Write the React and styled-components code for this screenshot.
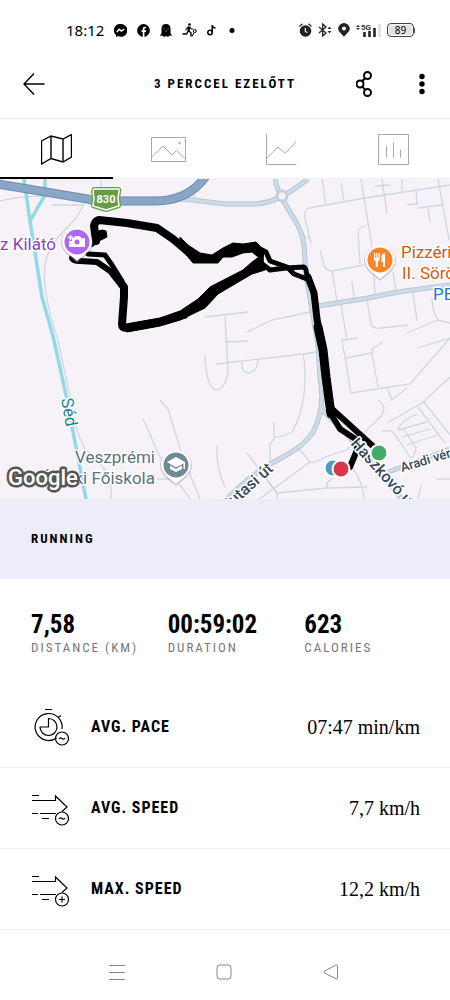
import React, { useState } from 'react';
import styled, { createGlobalStyle } from 'styled-components';

const condensed = '"Liberation Sans Narrow", "Roboto Condensed", "Open Sans Condensed", Roboto, sans-serif';

const GlobalStyle = createGlobalStyle`
  * {
    box-sizing: border-box;
  }

  body {
    margin: 0;
    background: #fff;
    color: #000;
    font-family: Roboto, sans-serif;
  }
`;

const Page = styled.div`
  display: flex;
  flex-direction: column;
  min-height: 100vh;
  overflow: hidden;
`;

const StatusBar = styled.div`
  display: flex;
  justify-content: space-between;
  align-items: center;
  height: 60px;
  padding: 0 35px 0 66px;
`;

const StatusGroup = styled.div`
  display: flex;
  align-items: center;
  gap: ${({ $gap }) => $gap}px;
`;

const Time = styled.span`
  font: 15px/20px "Noto Sans", sans-serif;
`;

const Battery = styled.span`
  display: flex;
  align-items: center;

  &::after {
    content: '';
    width: 1px;
    height: 5px;
    background: #555;
  }
`;

const BatteryLevel = styled.span`
  width: 27px;
  height: 14px;
  border: 1px solid #444;
  border-radius: 4px;
  background: #e2e2e2;
  box-shadow: inset 0 0 0 1px #fff;
  font: 10px/12px "Noto Sans", sans-serif;
  text-align: center;
`;

const Header = styled.header`
  display: grid;
  grid-template-columns: 1fr auto 1fr;
  align-items: center;
  height: 59px;
  padding: 0 16px 10px;
  border-bottom: 1px solid #e8e9f5;
`;

const HeaderActions = styled.div`
  display: flex;
  justify-content: flex-end;
  gap: 28px;
`;

const IconButton = styled.button`
  display: flex;
  justify-content: center;
  align-items: center;
  width: 36px;
  height: 36px;
  padding: 0;
  border: none;
  background: none;
`;

const MenuButton = styled(IconButton)`
  width: 24px;
`;

const Title = styled.h1`
  margin: 0;
  font: bold 13px/20px ${condensed};
  letter-spacing: 2px;
`;

const Tabs = styled.nav`
  display: grid;
  grid-template-columns: repeat(4, 1fr);
  height: 60px;
`;

const Tab = styled.button`
  display: flex;
  justify-content: center;
  align-items: center;
  padding: 2px 0 0;
  border: none;
  border-bottom: ${({ $active }) => ($active ? '2px solid #000' : '1px solid #eef0f4')};
  background: none;
  color: ${({ $active }) => ($active ? '#000' : '#aaa')};
`;

const MapView = styled.svg`
  display: block;
  width: 100%;
  height: 320px;
  background: #f6f2f8;
`;

const MapLabel = styled.text`
  font: ${({ $weight }) => $weight || 400} ${({ $size }) => $size || 17}px Roboto, sans-serif;
  fill: ${({ $color }) => $color};
  stroke: #fff;
  stroke-width: 3px;
  stroke-linejoin: round;
  paint-order: stroke;
`;

const Brand = styled.text`
  font: 500 22px Roboto, sans-serif;
  fill: #fff;
  stroke: #555;
  stroke-width: 5px;
  stroke-linejoin: round;
  paint-order: stroke;
`;

const Activity = styled.h2`
  margin: 0;
  padding: 30px 31px;
  background: #ededf9;
  font: bold 13px/20px ${condensed};
  letter-spacing: 2px;
`;

const Stats = styled.dl`
  display: grid;
  grid-template-columns: repeat(3, 1fr);
  height: 108px;
  margin: 0;
  padding: 32px 9px 0 31px;
`;

const Stat = styled.div`
  display: flex;
  flex-direction: column-reverse;
  justify-content: flex-end;
`;

const StatLabel = styled.dt`
  color: #777;
  font: 13px/20px ${condensed};
  letter-spacing: 2px;
`;

const StatValue = styled.dd`
  margin: 0;
  font: bold 25px/27px ${condensed};
`;

const Details = styled.dl`
  margin: 0;
`;

const DetailRow = styled.div`
  display: flex;
  align-items: center;
  height: 81px;
  padding: 0 30px 0 31px;
  border-bottom: 1px solid #eeeef8;
`;

const DetailLabel = styled.dt`
  flex: 1;
  padding-left: 20px;
  font: bold 16px/20px ${condensed};
  letter-spacing: 1px;
`;

const DetailValue = styled.dd`
  margin: 0;
  font: 20px/24px "Liberation Serif", serif;
`;

const SystemNav = styled.nav`
  display: flex;
  justify-content: center;
  gap: 71px;
  padding: 24px 2px 10px 0;
`;

const riverPaths = [
  'M24 0L30 42L42 118L53 157L66 216L86 320',
  'M45 0V16L30 42',
];

const wideRoads = [
  'M180 20L192 21L225 25L255 25Q270 24 282 17',
  'M275 -2Q276 10 282 17Q294 11 308 0',
  'M282 17C286 32 302 45 304 66L306 96L318 166L320 199Q326 229 313 253C306 264 297 271 272 284Q250 296 225 322',
  'M318 127L368 119L398 113L450 106',
  'M322 231L345 253L402 320',
  'M388 293L402 288L450 270',
];

const thinRoads = [
  'M0 22Q22 16 66 17', 'M51 26H84', 'M101 0V12', 'M192 12L196 21L188 20',
  'M84 21C80 45 58 50 48 75C40 95 46 125 58 161L70 218Q74 250 85 270C110 292 112 300 111 320',
  'M311 64L305 39Q304 31 309 29L365 19L450 6', 'M303 60L309 58',
  'M322 0L326 26', 'M341 4L344 22', 'M361 0L372 68L375 115', 'M402 0V13',
  'M375 7L390 6', 'M382 0L387 35', 'M438 0L449 61', 'M418 29L442 26', 'M428 29L430 43',
  'M416 12L417 25L407 26', 'M360 85L358 53Q358 49 367 46',
  'M320 71L324 86Q326 92 332 92L364 86', 'M332 92L337 122', 'M352 102L354 119',
  'M393 93L396 113', 'M413 113L417 142', 'M367 121L371 145Q372 150 382 149L408 146',
  'M341 126L347 161', 'M407 154L438 141L450 144', 'M432 119Q432 132 438 141',
  'M247 153L272 141L315 132', 'M205 138L248 133', 'M225 137L228 190Q227 208 217 211Q206 210 205 176',
  'M216 185L303 175L316 173', 'M225 163L248 162',
  'M303 175C307 195 306 230 292 253Q283 258 275 258L270 266V283', 'M274 243V258',
  'M242 183Q241 194 249 194Q257 193 258 180',
  'M358 159L342 161L351 214L410 205L450 159', 'M345 179L372 174L378 209',
  'M372 174V170L383 163', 'M417 169L450 159', 'M387 209L392 221L407 209',
  'M387 244L422 224L450 198', 'M418 228L445 264', 'M424 223L450 256',
  'M398 251L427 243', 'M402 258L430 250', 'M407 266L437 256',
  'M398 251Q400 242 417 235', 'M382 253Q389 250 394 254L410 278Q414 280 416 269L403 249',
  'M378 221Q387 228 382 236L347 271L325 278Q315 284 310 283L258 321', 'M300 271L310 283',
  'M247 274L277 314V320', 'M277 314L327 309L367 308', 'M352 288Q363 303 364 320',
  'M143 240L160 278L190 320', 'M160 221L168 230L182 276L200 320', 'M157 300H170',
  'M217 266Q216 290 225 308', 'M436 300H450', 'M418 320L421 306',
];

const routeStrands = [
  { d: 'M96 62L95 54L94 47Q95 42 99 41L127 44L157 49L173 60L186 71', width: 8 },
  { d: 'M72 79Q73 82 80 82L97 83L113 94L123 108', width: 6 },
  { d: 'M88 75L105 76L112 86L122 102', width: 5 },
  { d: 'M113 94L124 108L124 118L122 145Q122 149 127 149L160 143L184 136', width: 8 },
  { d: 'M256 68L266 73L270 82L287 88L294 95L307 100', width: 5 },
  { d: 'M261 84L270 91L286 89L304 88Q307 89 307 100', width: 5 },
  { d: 'M308 98L314 114L317 140L321 162', width: 7 },
  { d: 'M318 148L323 171L326 198L331 235', width: 9 },
  { d: 'M331 229L375 269', width: 6 },
  { d: 'M331 235L340 250L357 261V271L350 288', width: 6 },
];

const routeBands = [
  'M180 58L188 66L200 74L212 76L223 69L233 64L243 65L256 63L264 71L263 82L252 73L243 74L232 78L223 78L218 84L193 84L188 78L180 70Z',
  'M262 76L252 83L243 91L210 108L198 120L180 132L160 139L126 145L127 153L160 147L180 141L205 129L218 115L240 102L252 95L265 91Z',
  'M92 59L96 53L102 51L106 52L107 58L103 60L99 62L92 68Z',
];

const pins = [
  { x: 77, y: 63, color: '#b266f7' },
  { x: 380, y: 81, color: '#ff8524' },
  { x: 176, y: 286, color: '#708996' },
];

const dots = [
  { x: 333, y: 289, color: '#4b9dbb' },
  { x: 341, y: 290, color: '#d8364f' },
  { x: 379, y: 274, color: '#45ac67' },
];

const RouteMap = () => (
  <MapView viewBox="0 0 450 320" preserveAspectRatio="xMidYMid slice" role="img" aria-label="Route map">
    <g fill="none">
      <g stroke="#cdd8e2" strokeWidth="1.3">
        {thinRoads.map(d => <path key={d} d={d} />)}
      </g>
      <path d="M327 309V304L333 299M265 298L277 314" stroke="#a9d5c0" />
      <g stroke="#afc0d0" strokeWidth="5">
        {wideRoads.map(d => <path key={d} d={d} />)}
      </g>
      <g stroke="#cddbe7" strokeWidth="3.4">
        {wideRoads.map(d => <path key={d} d={d} />)}
      </g>
      <circle cx="282" cy="17" r="5" fill="#f6f2f8" stroke="#c0d0de" strokeWidth="3" />
      <g stroke="#91d9e8" strokeWidth="3.5">
        {riverPaths.map(d => <path key={d} d={d} />)}
      </g>
      <path d="M-2 5L88 20Q92 22 100 22H155C178 22 194 14 206 -3" stroke="#6c8bb0" strokeWidth="9" />
      <path d="M-2 5L88 20Q92 22 100 22H155C178 22 194 14 206 -3" stroke="#89a6c6" strokeWidth="7" />
      <g stroke="#000" strokeLinecap="round" strokeLinejoin="round">
        {routeStrands.map(({ d, width }) => <path key={d} d={d} strokeWidth={width} />)}
      </g>
    </g>
    <g stroke="#000" strokeLinejoin="round">
      {routeBands.map(d => <path key={d} d={d} />)}
    </g>

    <path d="M94 10H118Q120 10 119 13L118 19L119 27L106 31L93 27L94 19L93 13Z" fill="#679c43" stroke="#679c43" strokeWidth="4" strokeLinejoin="round" />
    <path d="M94 10H118Q120 10 119 13L118 19L119 27L106 31L93 27L94 19L93 13Z" fill="#679c43" stroke="#fff" strokeWidth="1.5" />
    <text x="106" y="24" textAnchor="middle" fill="#fff" fontSize="11" fontWeight="700">830</text>

    <MapLabel x="56" y="71" textAnchor="end" $color="#8b3fc8">z Kilátó</MapLabel>
    <MapLabel x="401" y="79" $color="#c8600f">Pizzéria</MapLabel>
    <MapLabel x="402" y="100" $color="#c8600f">II. Söröző</MapLabel>
    <MapLabel x="433" y="121" $color="#1c77d2">PENNY</MapLabel>
    <MapLabel x="155" y="284" textAnchor="end" $color="#587180">Veszprémi</MapLabel>
    <MapLabel x="155" y="305" textAnchor="end" $color="#587180">Érseki Főiskola</MapLabel>
    <MapLabel transform="translate(61 220) rotate(80)" $size={17} $color="#17859a">Séd</MapLabel>
    <MapLabel transform="translate(274 291) rotate(-42)" textAnchor="end" $size={16} $weight={500} $color="#35475a">Jutasi út</MapLabel>
    <MapLabel transform="translate(350 265) rotate(48)" $size={16} $weight={500} $color="#35475a">Haszkovó u.</MapLabel>
    <MapLabel transform="translate(402 293) rotate(-17)" $size={13} $weight={500} $color="#35475a">Aradi vértanúk</MapLabel>

    {pins.map(({ x, y, color }) => (
      <g key={color} transform={`translate(${x} ${y})`}>
        <path d="M0 21C-4 17 -16 10 -16 1A16 16 0 0 1 16 1C16 10 4 17 0 21Z" fill="#8a8595" opacity="0.4" />
        <path d="M0 19C-4 15 -15 9 -15 0A15 15 0 0 1 15 0C15 9 4 15 0 19Z" fill="#fff" />
        <circle r="12.5" fill={color} />
      </g>
    ))}
    <g fill="#fff">
      <path d="M72 59H74L75 57H80L81 59H84Q85 59 85 60V67Q85 68 84 68H70Q69 68 69 67V62H72Z" />
      <path d="M70 56H71V58H73V59H71V61H70V59H68V58H70Z" stroke="#fff" strokeWidth=".5" />
      <circle cx="77" cy="63" r="2.5" fill="#b266f7" />
      <path d="M374 74h1.2v5h1v-5h1.2v5h1v-5h1.2v6q0 2-1.8 2.5v5.500h-2v-5.500q-1.800-.5-1.800-2.500zM385 74v14h-2v-5h-1.500v-5q0-3.500 3.500-4z" />
      <path d="M167 283L176 278L185 283V290H183.500V284.500L176 288.500ZM170 286.500L176 290L182 286.500V290L176 293L170 290Z" />
    </g>
    {dots.map(({ x, y, color }) => (
      <circle key={color} cx={x} cy={y} r="8.5" fill={color} stroke="#fff" strokeWidth="2" />
    ))}
    <Brand x="8" y="306">Google</Brand>
  </MapView>
);

const StatusIcons = () => (
  <>
    <svg width="13" height="13" viewBox="0 0 13 13" aria-hidden="true">
      <path d="M6.500 0A6.300 6.300 0 0 0 2 11V13L4 12A6.400 6.400 0 1 0 6.500 0Z" />
      <path d="M2.800 8L5.200 5.300L7.500 7L10.200 5" fill="none" stroke="#fff" strokeWidth="1.500" />
    </svg>
    <svg width="13" height="13" viewBox="0 0 13 13" aria-hidden="true">
      <circle cx="6.500" cy="6.500" r="6.400" />
      <path d="M6.600 13V5Q6.600 3.300 9 3.500M4.500 7.200H9" fill="none" stroke="#fff" strokeWidth="1.700" />
    </svg>
    <svg width="12" height="13" viewBox="0 0 12 13" aria-hidden="true">
      <path d="M1.500 5Q1.500 0 6 0T10.500 5V9L12 12L9.500 11.500L8 13L6 12L4 13L2.500 11.500L0 12L1.500 9Z" />
      <path d="M4 4V5.500M8 4V5.500M5 7H7" stroke="#777" />
    </svg>
    <svg width="15" height="15" viewBox="0 0 15 15" fill="none" stroke="#000" aria-hidden="true">
      <circle cx="7.500" cy="1.500" r="1.300" fill="#000" stroke="none" />
      <path d="M7 3.500L6.500 7.500" strokeWidth="2.600" />
      <path d="M6.500 7.500L9 10V13.500M6.500 7.500L4.500 11H.5" strokeWidth="1.400" />
      <path d="M6.500 4L4 5.500V7.500M8 4L9 6H11M10 13.500L12 9.500" />
      <circle cx="12.800" cy="8" r="1.500" />
    </svg>
    <svg width="9" height="11" viewBox="0 0 9 11" fill="none" stroke="#000" strokeWidth="1.500" aria-hidden="true">
      <circle cx="3" cy="7.500" r="2.200" />
      <path d="M5.200 7.500V0Q5.500 3 8.500 3" />
    </svg>
    <svg width="9" height="5" viewBox="0 0 9 5" aria-hidden="true"><circle cx="6" cy="2.500" r="2.500" /></svg>
  </>
);

const SignalIcons = () => (
  <>
    <svg width="13" height="14" viewBox="0 0 13 14" aria-hidden="true">
      <circle cx="6.500" cy="8" r="5.800" fill="#222" />
      <path d="M.5 3.500L3.500 .8M12.500 3.500L9.500 .8" stroke="#222" strokeWidth="1.200" />
      <path d="M6.300 5V8.500L8.300 9.500" fill="none" stroke="#fff" strokeWidth="1.200" />
    </svg>
    <svg width="14" height="14" viewBox="0 0 14 14" aria-hidden="true">
      <path d="M1 4L8 10L4.700 13V1L8 4L1 10" fill="none" stroke="#222" strokeWidth="1.300" />
      <path d="M9.500 6L11.500 3.500L13.500 6ZM9.500 8L11.500 10.500L13.500 8Z" fill="#333" />
    </svg>
    <svg width="12" height="14" viewBox="0 0 12 14" aria-hidden="true">
      <path d="M6 14C4 11 .2 9 .2 5.600A5.800 5.600 0 0 1 11.800 5.600C11.800 9 8 11 6 14Z" fill="#222" />
      <circle cx="6" cy="5.500" r="2" fill="#fff" />
    </svg>
    <svg width="25" height="15" viewBox="0 0 25 15" aria-hidden="true">
      <path d="M0 4L2 2L4 4ZM0 5L2 7L4 5Z" fill="#333" />
      <path d="M8.500 9V14M13.500 8V14M18.500 5V14" stroke="#222" strokeWidth="2.600" />
      <path d="M23.500 1V14" stroke="#ddd" strokeWidth="2.500" />
      <text x="5" y="7" fontSize="8" fontWeight="700" fontFamily="Roboto, sans-serif" fill="#333">5G</text>
    </svg>
  </>
);

const tabs = [
  { id: 'map', icon: <path d="M.5 7L10 2L22 5L30.500 .5V23L22 28L10 24.500L.5 30ZM10 2V24.500M22 5V28" strokeWidth="1.400" /> },
  { id: 'photos', wide: true, icon: <><path d="M.5 3.500H34.500V27.500H.5ZM.5 23L12 12L21 21L25.500 16.500L34.500 25" /><circle cx="28.500" cy="9" r=".8" fill="currentColor" /></> },
  { id: 'graph', icon: <path d="M.5 0V30.500H30.500M1 24L12 13L19 19.500L30 8" /> },
  { id: 'chart', icon: <path d="M.5 .5H30.500V30.500H.5ZM8.500 12V23.500M15.500 8.500V23.500M22.500 16V23.500" /> },
];

const stats = [
  { label: 'DISTANCE (KM)', value: '7,58' },
  { label: 'DURATION', value: '00:59:02' },
  { label: 'CALORIES', value: '623' },
];

const speedArrow = 'M1 6.500H8M1 11.500H24.500V7L36 18L31 22.500M1 24.500H7M9 24.500H25M11 29.500H18';

const details = [
  {
    label: 'AVG. PACE',
    value: '07:47 min/km',
    icon: (
      <>
        <path d="M25.500 30A13.500 13.500 0 1 1 31 21M14 1.500H21M27 9.500L30 7.500M17.500 10.500A8.500 8.500 0 1 1 9 19H17.500Z" />
        <circle cx="31" cy="30.500" r="6.500" />
        <path d="M28 31Q29.500 29 31 30.500T34 30" />
      </>
    ),
  },
  {
    label: 'AVG. SPEED',
    value: '7,7 km/h',
    icon: (
      <>
        <path d={speedArrow} />
        <circle cx="31" cy="29.500" r="6.500" />
        <path d="M28 30Q29.500 28 31 29.500T34 29" />
      </>
    ),
  },
  {
    label: 'MAX. SPEED',
    value: '12,2 km/h',
    icon: (
      <>
        <path d={speedArrow} />
        <circle cx="31" cy="29.500" r="6.500" />
        <path d="M28 29.500H34M31 26.500V32.500" />
      </>
    ),
  },
];

export default function App() {
  const [activeTab, setActiveTab] = useState('map');

  return (
    <Page>
      <GlobalStyle />
      <StatusBar>
        <StatusGroup $gap={10}>
          <Time>18:12</Time>
          <StatusIcons />
        </StatusGroup>
        <StatusGroup $gap={6}>
          <SignalIcons />
          <Battery><BatteryLevel>89</BatteryLevel></Battery>
        </StatusGroup>
      </StatusBar>

      <Header>
        <IconButton aria-label="Back">
          <svg width="22" height="22" viewBox="0 0 22 22" fill="none" stroke="#000" strokeWidth="1.400">
            <path d="M11 .5L1 11L11 21.500M1 11H21.500" />
          </svg>
        </IconButton>
        <Title>3 PERCCEL EZELŐTT</Title>
        <HeaderActions>
          <IconButton aria-label="Share">
            <svg width="16" height="26" viewBox="0 0 16 26" fill="none" stroke="#000" strokeWidth="2">
              <circle cx="11.500" cy="4.500" r="3.500" />
              <circle cx="4" cy="13" r="3.500" />
              <circle cx="11.500" cy="21.500" r="3.500" />
              <path d="M9 7L6.500 10M6.500 15.500L9 19" />
            </svg>
          </IconButton>
          <MenuButton aria-label="More">
            <svg width="6" height="22" viewBox="0 0 6 22">
              <circle cx="3" cy="3.500" r="2.700" />
              <circle cx="3" cy="11" r="2.700" />
              <circle cx="3" cy="18.500" r="2.700" />
            </svg>
          </MenuButton>
        </HeaderActions>
      </Header>

      <Tabs>
        {tabs.map(({ id, icon, wide }) => (
          <Tab key={id} aria-label={id} $active={id === activeTab} onClick={() => setActiveTab(id)}>
            <svg width={wide ? 35 : 31} height="31" viewBox={`0 0 ${wide ? 35 : 31} 31`} fill="none" stroke="currentColor">
              {icon}
            </svg>
          </Tab>
        ))}
      </Tabs>

      <RouteMap />

      <Activity>RUNNING</Activity>
      <Stats>
        {stats.map(({ label, value }) => (
          <Stat key={label}>
            <StatLabel>{label}</StatLabel>
            <StatValue>{value}</StatValue>
          </Stat>
        ))}
      </Stats>
      <Details>
        {details.map(({ label, value, icon }) => (
          <DetailRow key={label}>
            <svg width="40" height="38" viewBox="0 0 40 38" fill="none" stroke="#000" strokeWidth="1.200" aria-hidden="true">
              {icon}
            </svg>
            <DetailLabel>{label}</DetailLabel>
            <DetailValue>{value}</DetailValue>
          </DetailRow>
        ))}
      </Details>

      <SystemNav>
        <IconButton aria-label="Recent apps">
          <svg width="16" height="16" viewBox="0 0 16 16" stroke="#888"><path d="M0 1.500H16M0 8.500H16M0 15.500H16" /></svg>
        </IconButton>
        <IconButton aria-label="Home">
          <svg width="16" height="16" viewBox="0 0 16 16" fill="none" stroke="#888"><rect x="1" y="1" width="14" height="14" rx="3" /></svg>
        </IconButton>
        <IconButton aria-label="Previous">
          <svg width="16" height="16" viewBox="0 0 16 16" fill="none" stroke="#888"><path d="M14.500 1.500V14.500Q14.500 15.500 13 14.800L1.500 9Q.5 8 1.500 7L13 1Q14.500 .5 14.500 1.500Z" /></svg>
        </IconButton>
      </SystemNav>
    </Page>
  );
}
